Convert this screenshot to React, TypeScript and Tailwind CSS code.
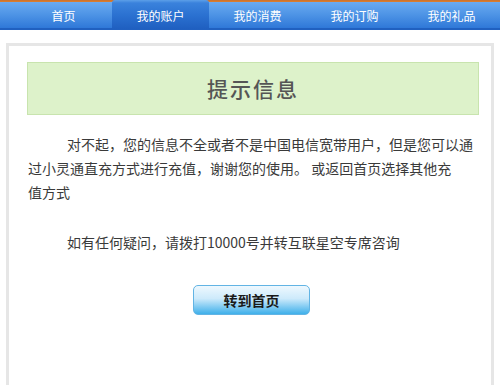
import React from "react";

const tabs = ["首页", "我的账户", "我的消费", "我的订购", "我的礼品"];

export default function App() {
  const font = { fontFamily: '"Noto Sans CJK SC", "Noto Sans", sans-serif' };
  return (
    <div className="w-[500px] h-[385px] overflow-hidden bg-white" style={font}>
      <div className="flex h-[31px] pl-[15px] bg-[linear-gradient(to_bottom,#c9702c_0px,#dd8030_2px,#6aaaf0_2px,#4f95e6_14px,#2f78d8_28px,#2060c0_28px,#2060c0_30px,#ffffff_30px)]">
        {tabs.map((t, i) => (
          <div
            key={t}
            className={
              "w-[98px] h-[29px] flex items-center justify-center text-[12px] text-white " +
              (i === 1
                ? "rounded-t-[3px] bg-[linear-gradient(to_bottom,#5c9fe8_0px,#3a82dc_3px,#2a70d0_16px,#1f5fc0_29px)] pt-[2px]"
                : "pt-[3px]")
            }
          >
            {t}
          </div>
        ))}
      </div>
      <div className="mt-[12px] mx-[6px] h-[400px] border-[3px] border-[#e6e6e6] bg-white">
        <div className="mt-[16px] ml-[18px] mr-[12px] h-[53px] border border-[#c8e4ae] bg-[#ddf2ca] flex items-center justify-center">
          <span className="text-[21px] text-[#555555] font-medium tracking-[2px]">提示信息</span>
        </div>
        <div className="mt-[17px] ml-[19px] text-[14px] leading-[24px] text-[#3a3a3a] whitespace-nowrap">
          <p className="pl-[39px]">对不起，您的信息不全或者不是中国电信宽带用户，但是您可以通</p>
          <p>过小灵通直充方式进行充值，谢谢您的使用。 或返回首页选择其他充</p>
          <p>值方式</p>
          <p className="pl-[39px] mt-[26px]">如有任何疑问，请拨打10000号并转互联星空专席咨询</p>
        </div>
        <div className="flex justify-center mt-[31px] pl-[3px]">
          <div className="w-[117px] h-[30px] rounded-[5px] border border-[#62b4e4] bg-[linear-gradient(to_bottom,#eef8fe_0%,#cdeafb_45%,#7fcaf2_75%,#3fb0ea_100%)] flex items-center justify-center text-[14px] font-bold text-[#1a1a1a]">
            转到首页
          </div>
        </div>
      </div>
    </div>
  );
}
